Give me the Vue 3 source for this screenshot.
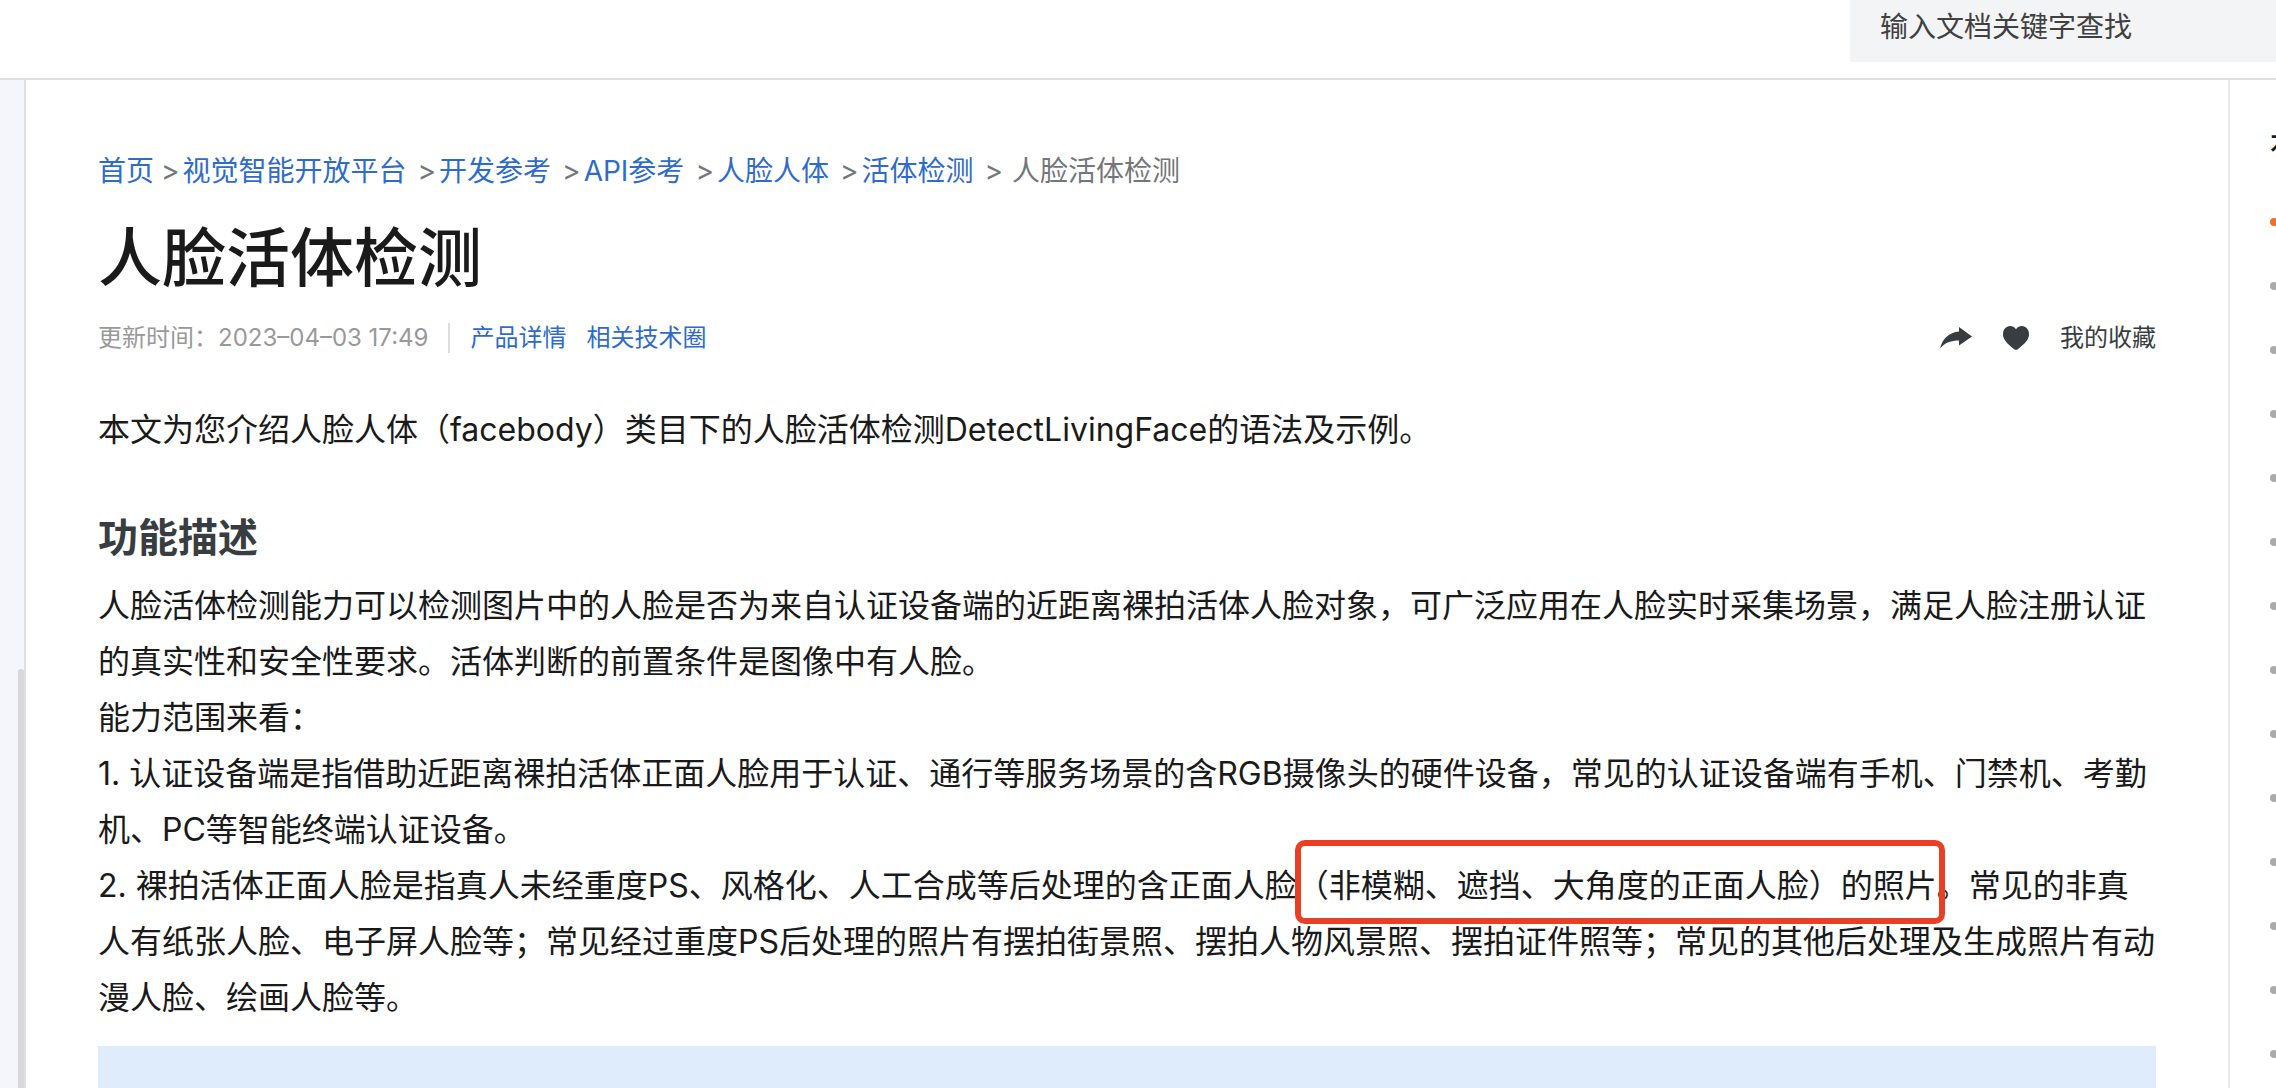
<script setup>
const crumbs = ['首页', '视觉智能开放平台', '开发参考', 'API参考', '人脸人体', '活体检测']
const sections = 14
</script>

<template>
  <div class="page">
    <header class="topbar">
      <input class="search" type="search" placeholder="输入文档关键字查找" aria-label="搜索文档" />
    </header>

    <div class="body">
      <aside class="menu"><div class="thumb"></div></aside>

      <main class="doc">
        <nav class="crumbs">
          <template v-for="c in crumbs" :key="c">
            <a href="#">{{ c }}</a><span class="sep">&gt;</span>
          </template>
          <span class="current">人脸活体检测</span>
        </nav>

        <h1>人脸活体检测</h1>

        <div class="meta">
          <span class="time">更新时间：2023–04–03 17:49</span>
          <a href="#" class="link">产品详情</a>
          <a href="#" class="link">相关技术圈</a>
          <div class="actions">
            <button type="button" aria-label="分享">
              <svg width="32" height="24" viewBox="0 0 32 24">
                <path d="M19 1 L32 10.500 L19 19.500 V14.500 C11 14.500 5 16.500 0 22.500 C2.500 12.500 9 6.500 19 5.500 Z" />
              </svg>
            </button>
            <button type="button" aria-label="收藏" class="heart">
              <svg width="26" height="24" viewBox="0 0 26 24">
                <path d="M13 3.200 C10.500 -.5 6.500 -.4 3.700 1 C.8 2.600 0 5.300 0 8.500 C0 13.500 4 17.500 11.300 23.300 Q13 24.600 14.700 23.300 C22 17.500 26 13.500 26 8.500 C26 5.300 25.200 2.600 22.300 1 C19.500 -.4 15.500 -.5 13 3.200 Z" />
              </svg>
            </button>
            <a href="#" class="fav">我的收藏</a>
          </div>
        </div>

        <p class="intro">本文为您介绍人脸人体（facebody）类目下的人脸活体检测DetectLivingFace的语法及示例。</p>

        <h2>功能描述</h2>
        <p>
          人脸活体检测能力可以检测图片中的人脸是否为来自认证设备端的近距离裸拍活体人脸对象，可广泛应用在人脸实时采集场景，满足人脸注册认证<br />的真实性和安全性要求。活体判断的前置条件是图像中有人脸。
        </p>
        <p>能力范围来看：</p>
        <p>
          1. 认证设备端是指借助近距离裸拍活体正面人脸用于认证、通行等服务场景的含RGB摄像头的硬件设备，常见的认证设备端有手机、门禁机、考勤<br />机、PC等智能终端认证设备。
        </p>
        <p>
          2. 裸拍活体正面人脸是指真人未经重度PS、风格化、人工合成等后处理的含正面人脸<span class="marked">（非模糊、遮挡、大角度的正面人脸）的照片</span>。常见的非真<br />人有纸张人脸、电子屏人脸等；常见经过重度PS后处理的照片有摆拍街景照、摆拍人物风景照、摆拍证件照等；常见的其他后处理及生成照片有动<br />漫人脸、绘画人脸等。
        </p>

        <div class="notice"></div>
      </main>

      <aside class="toc">
        <h3>本页导读</h3>
        <ul>
          <li v-for="n in sections" :key="n" :class="{ active: n === 1 }"></li>
        </ul>
      </aside>
    </div>
  </div>
</template>

<style>
body {
  margin: 0;
  background: #fff;
}
</style>

<style scoped>
.page {
  display: flex;
  flex-direction: column;
  min-height: 100vh;
  overflow: hidden;
  color: #1a1a1a;
  font-family: Inter, "Noto Sans CJK SC", sans-serif;
  font-size: 32px;
  line-height: 56px;
}
h1, h2, h3, p, ul {
  margin: 0;
  padding: 0;
}
a {
  color: #2f6cc9;
  text-decoration: none;
}
.topbar {
  display: flex;
  justify-content: flex-end;
  height: 78px;
  border-bottom: 2px solid #e0e0e0;
}
.search {
  box-sizing: border-box;
  width: 426px;
  height: 62px;
  padding: 0 30px 8px;
  border: 0;
  border-radius: 0;
  outline: 0;
  appearance: none;
  background: #f3f4f6;
  color: #404040;
  font: inherit;
  font-size: 28px;
}
.search::placeholder {
  color: #404040;
  opacity: 1;
}
.body {
  display: flex;
  flex: 1;
}
.menu {
  display: flex;
  flex: 0 0 24px;
  justify-content: flex-end;
  border-right: 2px solid #e0e0e0;
  background: #f5f6fb;
}
.thumb {
  width: 6px;
  margin-top: 589px;
  border-radius: 3px 3px 0 0;
  background: #d8d8d8;
}
.doc {
  display: flex;
  flex: 1;
  flex-direction: column;
  min-width: 0;
  padding: 71px 72px 0;
  white-space: nowrap;
}
.crumbs {
  display: flex;
  font-size: 28px;
  line-height: 40px;
}
.sep {
  margin: 0 3px 0 11px;
  color: #73777a;
}
.sep:nth-of-type(1) {
  margin-left: 7px;
}
.current {
  margin-left: 6px;
  color: #73777a;
}
h1 {
  margin-top: 27px;
  font-size: 64px;
  font-weight: 500;
  line-height: 80px;
}
.meta {
  display: flex;
  align-items: center;
  margin-top: 25px;
  font-size: 24px;
  line-height: 30px;
}
.time {
  padding-right: 20px;
  border-right: 2px solid #ddd;
  color: #999;
}
.link {
  margin-left: 20px;
}
.actions {
  display: flex;
  align-items: center;
  margin-left: auto;
}
button {
  display: flex;
  padding: 0;
  border: 0;
  background: none;
}
.heart {
  margin: 0 31px;
}
svg {
  fill: #373d41;
}
.fav {
  color: #373d41;
}
.intro {
  margin-top: 49px;
}
h2 {
  margin: 52px 0 12px;
  color: #373d41;
  font-size: 40px;
  font-weight: 700;
}
.marked {
  position: relative;
  display: inline-block;
}
.marked::after {
  position: absolute;
  inset: -18px -8px -10px -2px;
  border: 6px solid #e93f25;
  border-radius: 10px;
  content: "";
}
.notice {
  flex: 1;
  min-height: 42px;
  margin-top: 20px;
  background: #dfecfc;
}
.toc {
  box-sizing: border-box;
  flex: 0 0 48px;
  padding-left: 40px;
  overflow: hidden;
  border-left: 2px solid #e8e8e8;
}
.toc h3 {
  margin: 44px 0 26px;
  font-size: 28px;
  font-weight: 500;
  line-height: 40px;
  white-space: nowrap;
}
.toc ul {
  list-style: none;
}
.toc li {
  display: flex;
  align-items: center;
  height: 64px;
}
.toc li::before {
  flex: none;
  width: 8px;
  height: 8px;
  border-radius: 50%;
  background: #aaa;
  content: "";
}
.toc li.active::before {
  background: #ed702d;
}
</style>
